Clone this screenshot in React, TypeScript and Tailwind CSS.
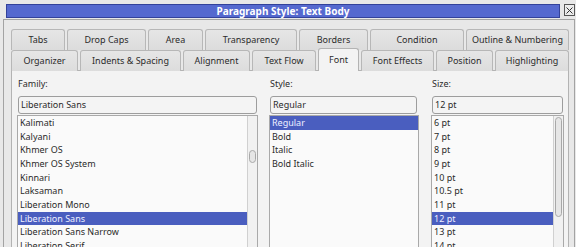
import React from "react";

const ROW1 = [
  { label: "Tabs", w: "w-[54px]" },
  { label: "Drop Caps", w: "w-[79px]" },
  { label: "Area", w: "w-[55px]" },
  { label: "Transparency", w: "w-[92px]" },
  { label: "Borders", w: "w-[69px]" },
  { label: "Condition", w: "w-[94px]" },
  { label: "Outline & Numbering", w: "w-[103px]" },
];

const ROW2 = [
  { label: "Organizer", w: "w-[67px]" },
  { label: "Indents & Spacing", w: "w-[101px]" },
  { label: "Alignment", w: "w-[67px]" },
  { label: "Text Flow", w: "w-[64px]" },
  { label: "Font", w: "w-[41px]", active: true },
  { label: "Font Effects", w: "w-[73px]" },
  { label: "Position", w: "w-[57px]" },
  { label: "Highlighting", w: "w-[74px]" },
];

const FAMILIES = [
  "Kalimati",
  "Kalyani",
  "Khmer OS",
  "Khmer OS System",
  "Kinnari",
  "Laksaman",
  "Liberation Mono",
  "Liberation Sans",
  "Liberation Sans Narrow",
  "Liberation Serif",
];

const STYLES = ["Regular", "Bold", "Italic", "Bold Italic"];

const SIZES = ["6 pt", "7 pt", "8 pt", "9 pt", "10 pt", "10.5 pt", "11 pt", "12 pt", "13 pt", "14 pt"];

function Tab({ label, w, active }: { label: string; w: string; active?: boolean }) {
  if (active) {
    return (
      <div
        className={`${w} relative z-10 -mt-[2px] flex h-[23px] items-center justify-center whitespace-nowrap rounded-t-[3px] border border-b-0 border-[#b3b3b3] bg-[#f3f3f3] pb-[1px]`}
      >
        {label}
      </div>
    );
  }
  return (
    <div
      className={`${w} flex h-[21px] items-center justify-center whitespace-nowrap rounded-t-[3px] border border-b-0 border-[#b7b7b7] bg-gradient-to-b from-[#e6e6e6] to-[#dcdcdc]`}
    >
      {label}
    </div>
  );
}

function ListBox({
  items,
  selected,
  width,
  scroll,
}: {
  items: string[];
  selected: number;
  width: string;
  scroll?: { top: string; h: string };
}) {
  return (
    <div className={`${width} mt-[1px] flex h-[140px] border border-[#a9a9a9] bg-[#fafafa]`}>
      <div className="min-w-0 flex-1">
        {items.map((it, i) => (
          <div
            key={it}
            className={
              i === selected
                ? "flex h-[13.67px] items-center whitespace-nowrap bg-[#4a5ebf] pl-[2px] text-[#eef0ff]"
                : "flex h-[13.67px] items-center whitespace-nowrap pl-[2px]"
            }
          >
            {it}
          </div>
        ))}
      </div>
      {scroll && (
        <div className="w-[10px] border-l border-[#d0d0d0] bg-[#f1f1f1] pl-[1px]">
          <div className={`${scroll.top} ${scroll.h} w-[7px] rounded-full border border-[#a8a8a8] bg-[#e6e6e6]`} />
        </div>
      )}
    </div>
  );
}

function Field({ value, width }: { value: string; width: string }) {
  return (
    <div
      className={`${width} mx-[1px] flex h-[18px] items-center rounded-[3px] border border-[#9d9d9d] bg-[#f4f4f4] pl-[2px]`}
    >
      {value}
    </div>
  );
}

export default function App() {
  return (
    <div className="relative h-[247px] w-[576px] overflow-hidden bg-[#e8e8e8] pt-[4px] text-[9px] text-[#2b2b2b] [font-family:'Noto_Sans',sans-serif]">
      {/* title bar */}
      <div className="flex h-[15px] items-start">
        <div className="ml-[6px] flex h-[14px] w-[554px] items-center justify-center border border-[#33429a] bg-[#5569cf] text-[10px] font-bold text-white">
          Paragraph Style: Text Body
        </div>
        <div className="ml-[4px] flex h-[12px] w-[11px] items-center justify-center border border-[#555] bg-[#ececec]">
          <svg width="7" height="7" viewBox="0 0 7 7">
            <path d="M0.5 0.5L6.5 6.5M6.5 0.5L0.5 6.5" stroke="#333" strokeWidth="1" />
          </svg>
        </div>
      </div>

      {/* dialog body */}
      <div className="ml-[3px] h-[240px] w-[572px] border-t border-l border-r border-[#a3a3a3] pl-[7px] pt-[9px]">
        <div className="flex gap-[2px]">
          {ROW1.map((t) => (
            <Tab key={t.label} {...t} />
          ))}
        </div>
        <div className="flex items-end gap-[2px]">
          {ROW2.map((t) => (
            <Tab key={t.label} {...t} />
          ))}
        </div>

        {/* font page */}
        <div className="-mt-[1px] flex h-[200px] w-[558px] gap-[11px] border border-[#b3b3b3] bg-[#f3f3f3] pl-[5px] pt-[6px]">
          <div className="flex flex-col">
            <div className="h-[19px] pl-[1px] leading-[14px]">Family:</div>
            <Field value="Liberation Sans" width="w-[239px]" />
            <ListBox
              items={FAMILIES}
              selected={7}
              width="w-[241px]"
              scroll={{ top: "mt-[34px]", h: "h-[13px]" }}
            />
          </div>
          <div className="flex flex-col">
            <div className="h-[19px] pl-[1px] leading-[14px]">Style:</div>
            <Field value="Regular" width="w-[147px]" />
            <ListBox items={STYLES} selected={0} width="w-[150px]" />
          </div>
          <div className="ml-[1px] flex flex-col">
            <div className="h-[19px] pl-[1px] leading-[14px]">Size:</div>
            <Field value="12 pt" width="w-[131px]" />
            <ListBox
              items={SIZES}
              selected={7}
              width="w-[133px]"
              scroll={{ top: "mt-[1px]", h: "h-[100px]" }}
            />
          </div>
        </div>
      </div>
    </div>
  );
}
